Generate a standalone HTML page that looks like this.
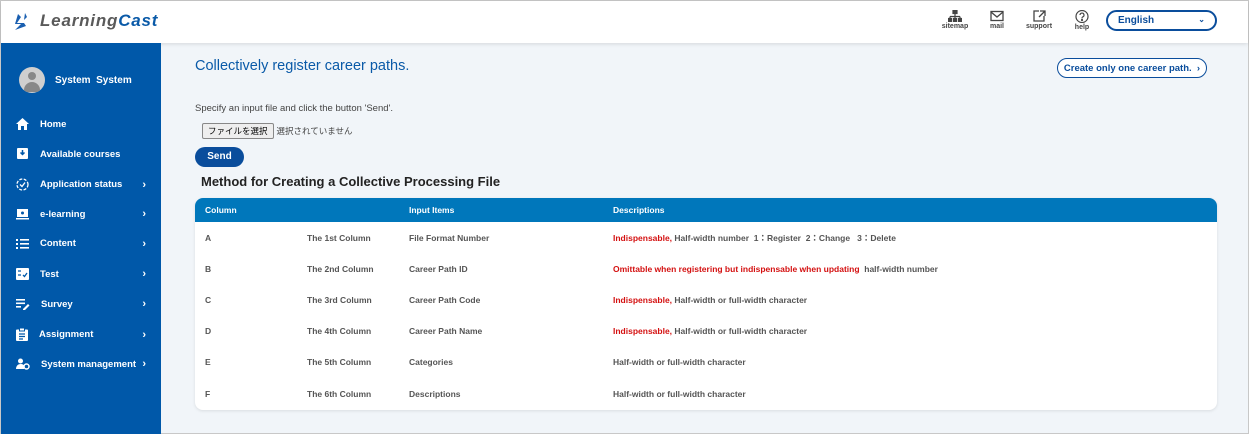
<!DOCTYPE html>
<html><head><meta charset="utf-8"><style>
*{box-sizing:border-box;margin:0;padding:0}
body{width:1249px;height:434px;overflow:hidden;font-family:"Liberation Sans","Noto Sans CJK JP",sans-serif;background:#f1f5f9;position:relative;border:1px solid #c8c8c8}
.hdr{position:absolute;left:0;top:0;width:1247px;height:42px;background:#fff;box-shadow:0 1px 4px rgba(0,0,0,.12)}
.logo{position:absolute;left:12px;top:10px;display:flex;align-items:center;gap:5px}
.logo span{font-size:17px;font-style:italic;font-weight:bold;color:#5a5a5a;letter-spacing:.8px}
.logo b{color:#0a5aa8}
.ic{position:absolute;top:9px;width:30px;text-align:center;font-size:7px;color:#444;font-weight:bold}
.ic svg{display:block;margin:0 auto 1px}
.lang{position:absolute;left:1105px;top:9px;width:111px;height:21px;border:2px solid #0a4d9c;border-radius:11px;font-size:10px;font-weight:bold;color:#0a4d9c;padding:3px 10px}
.side{position:absolute;left:0;top:42px;width:160px;height:391px;background:#0058a9;color:#fff}
.user{position:absolute;left:18px;top:24px;display:flex;align-items:center;gap:10px;font-size:10px;font-weight:bold}
.av{width:26px;height:26px;border-radius:50%;background:#cfcfcf;position:relative;overflow:hidden}
.av:before{content:"";position:absolute;left:9px;top:5px;width:8px;height:8px;border-radius:50%;background:#888}
.av:after{content:"";position:absolute;left:5px;top:15px;width:16px;height:10px;border-radius:8px 8px 0 0;background:#888}
.mi{position:absolute;left:15px;font-size:9.5px;font-weight:bold;display:flex;align-items:center;width:130px}
.mi svg{margin-right:11px;flex:none}
.mi em{position:absolute;right:0;font-style:normal;font-size:11px}
.title{position:absolute;left:194px;top:57px;font-size:14.5px;color:#0a5aa8}
.one{position:absolute;left:1056px;top:57px;width:150px;height:20px;border:1.5px solid #0a4d9c;border-radius:10px;background:#fff;font-size:9.5px;color:#0a4d9c;font-weight:bold;text-align:center;line-height:19px}
.spec{position:absolute;left:194px;top:102px;font-size:9.5px;color:#444}
.file{position:absolute;left:201px;top:122px;font-size:8.5px;color:#444}
.file span{display:inline-block;border:1px solid #888;background:#eee;padding:1px 5px;border-radius:2px;color:#000;margin-right:3px}
.send{position:absolute;left:194px;top:146px;width:49px;height:20px;border-radius:10px;background:#0a4d9c;color:#fff;font-size:10px;font-weight:bold;text-align:center;line-height:20px}
.h2{position:absolute;left:200px;top:173px;font-size:13px;font-weight:bold;color:#222}
.tbl{position:absolute;left:194px;top:197px;width:1022px;height:212px;background:#fff;border-radius:8px;overflow:hidden;box-shadow:0 1px 3px rgba(0,0,0,.1)}
.th{height:24px;background:#0077bb;color:#fff;font-size:8.5px;font-weight:bold;position:relative}
.row{height:31.2px;position:relative;font-size:8.5px;color:#555;font-weight:bold}
.c{position:absolute;top:50%;transform:translateY(-50%);white-space:nowrap}
.r{color:#d41010}
</style></head><body>
<div class="hdr">
<div class="logo"><svg width="22" height="20" viewBox="0 0 22 20"><path d="M5 3l3 3-4 6h7l2 3-11 4 6-6H2z" fill="#1a5fb0"/><path d="M12 2l2 4-3 3z" fill="#1a5fb0"/></svg><span>Learning<b>Cast</b></span></div>
<div class="ic" style="left:939px"><svg width="14" height="12" viewBox="0 0 14 12" fill="none" stroke="#444" stroke-width="1.2"><rect x="5" y="0.5" width="4" height="3" fill="#444"/><path d="M7 3.5v3M2 6.5h10M2 6.5v2M7 6.5v2M12 6.5v2"/><rect x="0.5" y="8.5" width="3" height="3" fill="#444"/><rect x="5.5" y="8.5" width="3" height="3" fill="#444"/><rect x="10.5" y="8.5" width="3" height="3" fill="#444"/></svg>sitemap</div>
<div class="ic" style="left:981px"><svg width="14" height="12" viewBox="0 0 14 12" fill="none" stroke="#444" stroke-width="1.3"><rect x="1" y="1.5" width="12" height="9"/><path d="M1 2l6 5 6-5"/></svg>mail</div>
<div class="ic" style="left:1023px"><svg width="13" height="12" viewBox="0 0 13 12" fill="none" stroke="#444" stroke-width="1.3"><path d="M6 1H1v10h10V6M7 1h5v5M12 1L6 7"/></svg>support</div>
<div class="ic" style="left:1066px"><svg width="14" height="13" viewBox="0 0 14 13" fill="none" stroke="#444" stroke-width="1.2"><circle cx="7" cy="6.5" r="6"/><path d="M5 5a2 2 0 1 1 2.5 2c-.5.3-.5.6-.5 1.5"/><circle cx="7" cy="10" r=".5" fill="#444"/></svg>help</div>
<div class="lang">English<span style="float:right;font-size:8px">⌄</span></div>
</div>
<div class="side">
<div class="user"><div class="av"></div>System&nbsp; System</div>
<div class="mi" style="top:75px"><svg width="13" height="12" viewBox="0 0 13 12"><path d="M6.5 0L0 6h2v6h3V8h3v4h3V6h2z" fill="#fff"/></svg>Home</div>
<div class="mi" style="top:105px"><svg width="13" height="12" viewBox="0 0 13 12"><rect x="1" y="0" width="11" height="11" rx="1" fill="#fff"/><path d="M6.5 2v4M4.5 4.5l2 2 2-2" stroke="#0058a9" stroke-width="1.5" fill="none"/></svg>Available courses</div>
<div class="mi" style="top:135px"><svg width="13" height="13" viewBox="0 0 13 13" fill="none" stroke="#fff" stroke-width="1.3"><circle cx="6.5" cy="6.5" r="5.5" stroke-dasharray="3 1.5"/><path d="M4 6.5l2 2 3-4"/></svg>Application status<em>›</em></div>
<div class="mi" style="top:165px"><svg width="13" height="12" viewBox="0 0 13 12"><rect x="1" y="1" width="11" height="8" fill="#fff"/><rect x="0" y="10" width="13" height="1.5" fill="#fff"/><circle cx="6.5" cy="5" r="1.5" fill="#0058a9"/></svg>e-learning<em>›</em></div>
<div class="mi" style="top:195px"><svg width="13" height="11" viewBox="0 0 13 11" fill="#fff"><rect x="0" y="1" width="2" height="2"/><rect x="0" y="5" width="2" height="2"/><rect x="0" y="9" width="2" height="2"/><rect x="4" y="1" width="9" height="1.6"/><rect x="4" y="5" width="9" height="1.6"/><rect x="4" y="9" width="9" height="1.6"/></svg>Content<em>›</em></div>
<div class="mi" style="top:225px"><svg width="13" height="12" viewBox="0 0 13 12"><rect x="0" y="0" width="13" height="12" rx="1" fill="#fff"/><path d="M2 3h3M2 7h3M7 7l1.5 1.5L11 5" stroke="#0058a9" stroke-width="1.3" fill="none"/></svg>Test<em>›</em></div>
<div class="mi" style="top:255px"><svg width="14" height="12" viewBox="0 0 14 12" fill="#fff"><rect x="0" y="1" width="9" height="1.6"/><rect x="0" y="4.5" width="9" height="1.6"/><rect x="0" y="8" width="5" height="1.6"/><path d="M7 11l5-5 1.5 1.5-5 5H7z"/></svg>Survey<em>›</em></div>
<div class="mi" style="top:285px"><svg width="12" height="13" viewBox="0 0 12 13"><rect x="0" y="1.5" width="12" height="11.5" rx="1" fill="#fff"/><rect x="3.5" y="0" width="5" height="3" fill="#fff" stroke="#0058a9"/><path d="M3 6h6M3 8.5h6M3 11h4" stroke="#0058a9" stroke-width="1.2"/></svg>Assignment<em>›</em></div>
<div class="mi" style="top:315px"><svg width="14" height="12" viewBox="0 0 14 12" fill="#fff"><circle cx="4.5" cy="3" r="2.5"/><path d="M0 11c0-3 2-5 4.5-5S8 7 8 8v3z"/><circle cx="10.5" cy="8.5" r="2.5" fill="none" stroke="#fff" stroke-width="1.5"/></svg>System management<em>›</em></div>
</div>
<div class="title">Collectively register career paths.</div>
<div class="one">Create only one career path. &nbsp;›</div>
<div class="spec">Specify an input file and click the button 'Send'.</div>
<div class="file"><span>ファイルを選択</span>選択されていません</div>
<div class="send">Send</div>
<div class="h2">Method for Creating a Collective Processing File</div>
<div class="tbl">
<div class="th"><span class="c" style="left:10px">Column</span><span class="c" style="left:214px">Input Items</span><span class="c" style="left:418px">Descriptions</span></div>
<div class="row"><span class="c" style="left:10px">A</span><span class="c" style="left:112px">The 1st Column</span><span class="c" style="left:214px">File Format Number</span><span class="c" style="left:418px"><span class="r">Indispensable,</span> Half-width number &nbsp;1：Register &nbsp;2：Change &nbsp;&nbsp;3：Delete</span></div>
<div class="row"><span class="c" style="left:10px">B</span><span class="c" style="left:112px">The 2nd Column</span><span class="c" style="left:214px">Career Path ID</span><span class="c" style="left:418px"><span class="r">Omittable when registering but indispensable when updating</span> &nbsp;half-width number</span></div>
<div class="row"><span class="c" style="left:10px">C</span><span class="c" style="left:112px">The 3rd Column</span><span class="c" style="left:214px">Career Path Code</span><span class="c" style="left:418px"><span class="r">Indispensable,</span> Half-width or full-width character</span></div>
<div class="row"><span class="c" style="left:10px">D</span><span class="c" style="left:112px">The 4th Column</span><span class="c" style="left:214px">Career Path Name</span><span class="c" style="left:418px"><span class="r">Indispensable,</span> Half-width or full-width character</span></div>
<div class="row"><span class="c" style="left:10px">E</span><span class="c" style="left:112px">The 5th Column</span><span class="c" style="left:214px">Categories</span><span class="c" style="left:418px">Half-width or full-width character</span></div>
<div class="row"><span class="c" style="left:10px">F</span><span class="c" style="left:112px">The 6th Column</span><span class="c" style="left:214px">Descriptions</span><span class="c" style="left:418px">Half-width or full-width character</span></div>
</div>
</body></html>
